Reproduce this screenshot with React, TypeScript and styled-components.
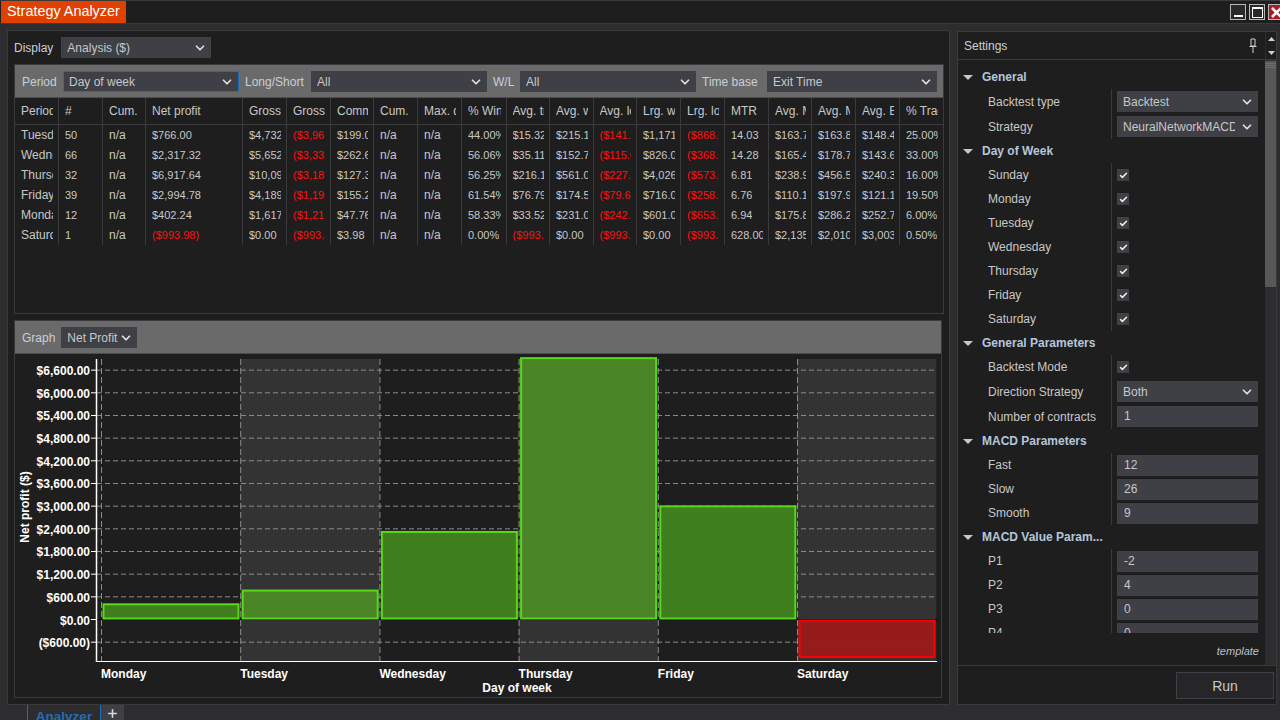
import { ChevronDown, Check, Plus } from "lucide-react";
import styled, { createGlobalStyle } from "styled-components";

const columns = [44, 44, 43, 97, 44, 44, 43, 44, 44, 44.5, 43.5, 43.5, 43.5, 44, 44, 44, 43, 44, 44, 44];

const headers = [
  "Period", "#", "Cum.", "Net profit", "Gross", "Gross", "Comm", "Cum.", "Max. drawdown", "% Win",
  "Avg. trade", "Avg. win", "Avg. loss", "Lrg. win", "Lrg. loss", "MTR", "Avg. MAE", "Avg. MFE", "Avg. ETD", "% Trades"
];

const rows = [
  ["Tuesday", "50", "n/a", "$766.00", "$4,732.00", "($3,966.00)", "$199.00", "n/a", "n/a", "44.00%", "$15.32", "$215.10", "($141.60)", "$1,171.00", "($868.00)", "14.03", "$163.70", "$163.80", "$148.40", "25.00%"],
  ["Wednesday", "66", "n/a", "$2,317.32", "$5,652.00", "($3,335.00)", "$262.60", "n/a", "n/a", "56.06%", "$35.11", "$152.70", "($115.00)", "$826.00", "($368.00)", "14.28", "$165.40", "$178.70", "$143.60", "33.00%"],
  ["Thursday", "32", "n/a", "$6,917.64", "$10,090.00", "($3,180.00)", "$127.30", "n/a", "n/a", "56.25%", "$216.10", "$561.00", "($227.00)", "$4,026.00", "($573.00)", "6.81", "$238.90", "$456.50", "$240.30", "16.00%"],
  ["Friday", "39", "n/a", "$2,994.78", "$4,189.00", "($1,190.00)", "$155.20", "n/a", "n/a", "61.54%", "$76.79", "$174.50", "($79.60)", "$716.00", "($258.00)", "6.76", "$110.10", "$197.90", "$121.10", "19.50%"],
  ["Monday", "12", "n/a", "$402.24", "$1,617.00", "($1,210.00)", "$47.76", "n/a", "n/a", "58.33%", "$33.52", "$231.00", "($242.00)", "$601.00", "($653.00)", "6.94", "$175.80", "$286.20", "$252.70", "6.00%"],
  ["Saturday", "1", "n/a", "($993.98)", "$0.00", "($993.98)", "$3.98", "n/a", "n/a", "0.00%", "($993.98)", "$0.00", "($993.98)", "$0.00", "($993.98)", "628.00", "$2,135.00", "$2,010.00", "$3,003.00", "0.50%"]
];

const days = [
  { name: "Monday", value: 402.24 },
  { name: "Tuesday", value: 766 },
  { name: "Wednesday", value: 2317.32 },
  { name: "Thursday", value: 6917.64 },
  { name: "Friday", value: 2994.78 },
  { name: "Saturday", value: -993.98 }
];

const ticks = [6600, 6000, 5400, 4800, 4200, 3600, 3000, 2400, 1800, 1200, 600, 0, -600];

type SettingRow =
  | { label: string; kind: "select" | "input"; value: string; tall?: boolean }
  | { label: string; kind: "check" };

const weekDays = ["Sunday", "Monday", "Tuesday", "Wednesday", "Thursday", "Friday", "Saturday"];

const sections: { title: string; rows: SettingRow[] }[] = [
  {
    title: "General",
    rows: [
      { label: "Backtest type", kind: "select", value: "Backtest", tall: true },
      { label: "Strategy", kind: "select", value: "NeuralNetworkMACD", tall: true }
    ]
  },
  {
    title: "Day of Week",
    rows: weekDays.map((label) => ({ label, kind: "check" as const }))
  },
  {
    title: "General Parameters",
    rows: [
      { label: "Backtest Mode", kind: "check" },
      { label: "Direction Strategy", kind: "select", value: "Both", tall: true },
      { label: "Number of contracts", kind: "input", value: "1", tall: true }
    ]
  },
  {
    title: "MACD Parameters",
    rows: [
      { label: "Fast", kind: "input", value: "12" },
      { label: "Slow", kind: "input", value: "26" },
      { label: "Smooth", kind: "input", value: "9" }
    ]
  },
  {
    title: "MACD Value Param...",
    rows: [
      { label: "P1", kind: "input", value: "-2" },
      { label: "P2", kind: "input", value: "4" },
      { label: "P3", kind: "input", value: "0" },
      { label: "P4", kind: "input", value: "0" },
      { label: "P5", kind: "input", value: "0" }
    ]
  }
];

const gridColumns = columns.map((c) => `${c}px`).join(" ");

const money = (v: number) => {
  const text = "$" + Math.abs(v).toLocaleString("en-US", { minimumFractionDigits: 2 });
  return v < 0 ? `(${text})` : text;
};

const yOf = (v: number) => 619.5 - (v * 22.67) / 600;

const ProfitChart = () => {
  const colW = 139.2;
  return (
    <ChartSvg viewBox="15 354 926 343">
      {days.map((d, i) =>
        i % 2 === 1 ? <rect key={d.name} x={101 + i * colW} y={359} width={colW} height={302} fill="#333333" /> : null
      )}
      {ticks.map((t) => (
        <line key={t} x1={97} x2={937} y1={yOf(t)} y2={yOf(t)} stroke="#8c8c8c" strokeDasharray="5 3" />
      ))}
      {days.map((d, i) => (
        <line
          key={d.name}
          x1={101.5 + i * colW}
          x2={101.5 + i * colW}
          y1={359}
          y2={664}
          stroke="#8c8c8c"
          strokeDasharray="6 3"
        />
      ))}
      <line x1={97} x2={937} y1={619.5} y2={619.5} stroke="#000" />
      {days.map((d, i) => {
        const x = 103.5 + i * colW;
        const top = yOf(Math.max(d.value, 0));
        const bottom = yOf(Math.min(d.value, 0));
        const up = d.value > 0;
        return (
          <rect
            key={d.name}
            x={x}
            y={top + (up ? 0 : 1)}
            width={135}
            height={bottom - top - 1}
            fill={up ? (i % 2 ? "#4a8628" : "#3f7f20") : "#9c1a1a"}
            fillOpacity={up ? 1 : 0.95}
            stroke={up ? "#58d816" : "#ff0000"}
            strokeWidth={2}
          />
        );
      })}
      <line x1={96.5} x2={96.5} y1={359} y2={662} stroke="#fff" strokeWidth={1.5} />
      <line x1={96} x2={937} y1={661.5} y2={661.5} stroke="#fff" strokeWidth={1.2} />
      {ticks.map((t) => (
        <g key={t}>
          <line x1={91} x2={96} y1={yOf(t)} y2={yOf(t)} stroke="#fff" />
          <AxisText x={90} y={yOf(t) + 5} textAnchor="end">
            {money(t)}
          </AxisText>
        </g>
      ))}
      {days.map((d, i) => (
        <AxisText key={d.name} x={101 + i * colW} y={678}>
          {d.name}
        </AxisText>
      ))}
      <AxisText x={517} y={692} textAnchor="middle">
        Day of week
      </AxisText>
      <AxisText x={29} y={507} textAnchor="middle" transform="rotate(-90 29 507)">
        Net profit ($)
      </AxisText>
    </ChartSvg>
  );
};

const Dropdown = ({ value, focused, className }: { value: string; focused?: boolean; className?: string }) => (
  <Select $focused={focused} className={className}>
    <SelectText>{value}</SelectText>
    <ChevronDown size={14} strokeWidth={3} color="#e0e0e0" />
  </Select>
);

export default function App() {
  return (
    <Page>
      <GlobalStyle />
      <TitleBar>
        <TitleTab>Strategy Analyzer</TitleTab>
        <WindowControls>
          <WinButton>
            <svg width="11" height="11" viewBox="0 0 11 11">
              <rect x="1" y="8" width="9" height="2" fill="#fff" />
            </svg>
          </WinButton>
          <WinButton>
            <svg width="11" height="11" viewBox="0 0 11 11">
              <rect x="0.5" y="0.5" width="10" height="10" fill="none" stroke="#fff" />
              <rect x="0" y="0" width="11" height="2" fill="#fff" />
            </svg>
          </WinButton>
          <CloseButton>
            <svg width="11" height="11" viewBox="0 0 11 11">
              <path d="M1 1 L10 10 M10 1 L1 10" stroke="#fff" strokeWidth="2.6" />
            </svg>
          </CloseButton>
        </WindowControls>
      </TitleBar>

      <Body>
        <MainPanel>
          <DisplayRow>
            <Label>Display</Label>
            <DisplaySelect value="Analysis ($)" />
          </DisplayRow>

          <TableBox>
            <FilterBar>
              <Label>Period</Label>
              <Dropdown value="Day of week" focused />
              <Label>Long/Short</Label>
              <Dropdown value="All" />
              <Label>W/L</Label>
              <Dropdown value="All" />
              <Label>Time base</Label>
              <Dropdown value="Exit Time" />
            </FilterBar>
            <HeaderRow style={{ gridTemplateColumns: gridColumns }}>
              {headers.map((h, i) => (
                <Cell key={`th-${i}`}>
                  <CellText>{h}</CellText>
                </Cell>
              ))}
            </HeaderRow>
            {rows.map((row) => (
              <DataRow key={row[0]} style={{ gridTemplateColumns: gridColumns }}>
                {row.map((v, i) => (
                  <Cell key={`td-${i}`}>
                    <CellText $negative={v.startsWith("(")} $numeric={/^[\d$(]/.test(v)}>
                      {v}
                    </CellText>
                  </Cell>
                ))}
              </DataRow>
            ))}
          </TableBox>

          <GraphBox>
            <GraphBar>
              <Label>Graph</Label>
              <GraphSelect value="Net Profit" />
            </GraphBar>
            <ProfitChart />
          </GraphBox>
        </MainPanel>

        <SidePanel>
          <SideHeader>
            <SideTitle>
              <span>Settings</span>
              <svg width="8" height="15" viewBox="0 0 8 15">
                <path d="M2 1 H6 V8 H2 Z M0.5 8.5 H7.5 M4 9 V15" fill="none" stroke="#d0d0d0" />
              </svg>
            </SideTitle>
            <ScrollButtons>
              <svg width="7" height="4" viewBox="0 0 7 4">
                <path d="M3.5 0 L7 4 H0 Z" fill="#d0d0d0" />
              </svg>
              <svg width="7" height="4" viewBox="0 0 7 4">
                <path d="M0 0 H7 L3.5 4 Z" fill="#d0d0d0" />
              </svg>
            </ScrollButtons>
          </SideHeader>
          <SideContent>
            <SideMain>
              <SettingsScroll>
                {sections.map((s) => (
                  <div key={s.title}>
                    <SectionTitle>
                      <svg width="10" height="5" viewBox="0 0 10 5">
                        <path d="M0 0 H10 L5 5 Z" fill="#c8c8c8" />
                      </svg>
                      <span>{s.title}</span>
                    </SectionTitle>
                    {s.rows.map((r) => (
                      <PropRow key={r.label} $tall={r.kind !== "check" && r.tall}>
                        <PropLabel>{r.label}</PropLabel>
                        <PropValue>
                          {r.kind === "check" && (
                            <CheckBox>
                              <Check size={9} strokeWidth={4} color="#f0f0f0" />
                            </CheckBox>
                          )}
                          {r.kind === "select" && <PropSelect value={r.value} />}
                          {r.kind === "input" && <PropInput>{r.value}</PropInput>}
                        </PropValue>
                      </PropRow>
                    ))}
                  </div>
                ))}
              </SettingsScroll>
              <TemplateLink>template</TemplateLink>
            </SideMain>
            <ScrollTrack>
              <ScrollThumb />
            </ScrollTrack>
          </SideContent>
          <SideFooter>
            <RunButton>Run</RunButton>
          </SideFooter>
        </SidePanel>
      </Body>

      <TabBar>
        <ActiveTab>Analyzer</ActiveTab>
        <AddTab>
          <Plus size={13} strokeWidth={3} color="#d8d8d8" />
        </AddTab>
      </TabBar>
    </Page>
  );
}

const GlobalStyle = createGlobalStyle`
  html, body {
    margin: 0;
    padding: 0;
    background: #2d2d30;
  }
  * {
    box-sizing: border-box;
  }
`;

const Page = styled.div`
  width: 1280px;
  height: 720px;
  overflow: hidden;
  display: flex;
  flex-direction: column;
  background: #2d2d30;
  color: #c8c8c8;
  font-family: "Liberation Sans", Arial, sans-serif;
  font-size: 12px;
`;

const TitleBar = styled.div`
  height: 24px;
  flex: none;
  display: flex;
  justify-content: space-between;
  background: #1e1e1e;
  border-top: 1px solid #3a3a3c;
  border-bottom: 1px solid #3a3a3c;
`;

const TitleTab = styled.div`
  width: 125px;
  margin-left: 1px;
  padding-left: 6px;
  height: 22px;
  line-height: 21px;
  background: #e04000;
  color: #fff;
  font-size: 14.4px;
  white-space: nowrap;
`;

const WindowControls = styled.div`
  display: flex;
  gap: 3px;
  padding-top: 3px;
  width: 50px;
  overflow: hidden;
`;

const WinButton = styled.div`
  width: 16px;
  height: 16px;
  flex: none;
  display: flex;
  align-items: center;
  justify-content: center;
  border: 1px solid #b8b8b8;
  background: #2a2a2a;
`;

const CloseButton = styled(WinButton)`
  background: #a51d22;
`;

const Body = styled.div`
  flex: 1;
  min-height: 0;
  display: flex;
  gap: 7px;
  padding: 6px 3px 0 7px;
`;

const MainPanel = styled.div`
  width: 943px;
  display: flex;
  flex-direction: column;
  padding: 6px 5px 6px 6px;
  background: #1e1e1e;
  border: 1px solid #3a3a3c;
`;

const DisplayRow = styled.div`
  height: 21px;
  margin-bottom: 6px;
  flex: none;
  display: flex;
  align-items: center;
  gap: 8px;
`;

const Label = styled.div`
  color: #c8d0d8;
  white-space: nowrap;
`;

const Select = styled.div<{ $focused?: boolean }>`
  height: 21px;
  display: flex;
  align-items: center;
  justify-content: space-between;
  padding: 0 4px 0 ${({ $focused }) => ($focused ? "5px" : "6px")};
  background: #3f3f46;
  color: #c8c8c8;
  border: ${({ $focused }) => ($focused ? "1px solid #1c6fb8" : "none")};
  overflow: hidden;
`;

const SelectText = styled.span`
  white-space: nowrap;
  overflow: hidden;
  flex: 1;
`;

const DisplaySelect = styled(Dropdown)`
  width: 150px;
`;

const TableBox = styled.div`
  height: 250px;
  flex: none;
  border: 1px solid #3a3a3c;
`;

const FilterBar = styled.div`
  height: 33px;
  display: grid;
  grid-template-columns: 41px 176px 72px 176px 33px 176px 71px 170px;
  align-items: center;
  padding: 1px 0 0 7px;
  background: #6a6a6a;
  border-bottom: 1px solid #4c4c4c;

  ${Label}:not(:first-child) {
    padding-left: 6px;
  }
`;

const HeaderRow = styled.div`
  display: grid;
  height: 27px;
  border-bottom: 1px solid #3a3a3c;
`;

const DataRow = styled.div`
  display: grid;
  height: 20px;
`;

const Cell = styled.div`
  display: flex;
  align-items: center;
  padding: 0 5px 0 6px;
  border-right: 1px solid #3a3a3c;
  min-width: 0;
`;

const CellText = styled.div<{ $negative?: boolean; $numeric?: boolean }>`
  overflow: hidden;
  white-space: nowrap;
  color: ${({ $negative }) => ($negative ? "#ff1010" : "#c8c8c8")};
  font-size: ${({ $numeric }) => ($numeric ? "11px" : "12px")};
`;

const GraphBox = styled.div`
  flex: 1;
  margin-top: 6px;
  width: 928px;
  min-height: 0;
  display: flex;
  flex-direction: column;
  border: 1px solid #3a3a3c;
`;

const GraphBar = styled.div`
  height: 33px;
  flex: none;
  display: flex;
  align-items: center;
  gap: 6px;
  padding: 1px 0 0 7px;
  background: #6a6a6a;
  border-bottom: 1px solid #4c4c4c;
`;

const GraphSelect = styled(Dropdown)`
  width: 76px;
`;

const ChartSvg = styled.svg`
  display: block;
  flex: none;
  width: 926px;
  height: 343px;
`;

const AxisText = styled.text`
  fill: #fff;
  font-family: "Liberation Sans", Arial, sans-serif;
  font-size: 12px;
  font-weight: bold;
`;

const SidePanel = styled.div`
  width: 320px;
  margin-top: 1px;
  display: flex;
  flex-direction: column;
  background: #1e1e1e;
  border: 1px solid #3a3a3c;
`;

const SideHeader = styled.div`
  height: 28px;
  flex: none;
  display: flex;
  border-bottom: 1px solid #3a3a3c;
`;

const SideTitle = styled.div`
  flex: 1;
  display: flex;
  align-items: center;
  justify-content: space-between;
  padding: 0 8px 0 6px;
  color: #c8d0d8;
`;

const ScrollButtons = styled.div`
  width: 11px;
  flex: none;
  display: flex;
  flex-direction: column;
  align-items: center;
  justify-content: center;
  gap: 10px;
  border-left: 1px solid #2d2d30;
`;

const SideContent = styled.div`
  flex: 1;
  min-height: 0;
  display: flex;
`;

const SideMain = styled.div`
  flex: 1;
  min-width: 0;
  display: flex;
  flex-direction: column;
  background: #1e1e1e;
`;

const SettingsScroll = styled.div`
  height: 573px;
  flex: none;
  padding-top: 5px;
  overflow: hidden;
`;

const SectionTitle = styled.div`
  height: 24px;
  display: flex;
  align-items: center;
  gap: 9px;
  padding-left: 5px;
  font-weight: bold;
  color: #b4c6dc;
`;

const PropRow = styled.div<{ $tall?: boolean }>`
  height: ${({ $tall }) => ($tall ? "25px" : "24px")};
  display: grid;
  grid-template-columns: 154px minmax(0, 1fr);
`;

const PropLabel = styled.div`
  display: flex;
  align-items: center;
  padding-left: 30px;
  color: #c8c8c8;
  border-right: 1px solid #3a3a3c;
`;

const PropValue = styled.div`
  display: flex;
  align-items: center;
  min-width: 0;
  padding: 0 7px 0 5px;
`;

const PropSelect = styled(Dropdown)`
  width: 100%;

  ${SelectText} {
    margin-right: 5px;
  }
`;

const PropInput = styled.div`
  width: 100%;
  height: 21px;
  line-height: 21px;
  padding-left: 7px;
  background: #3f3f46;
  color: #c8c8c8;
`;

const CheckBox = styled.div`
  width: 12px;
  height: 12px;
  display: flex;
  align-items: center;
  justify-content: center;
  background: #3f3f46;
`;

const TemplateLink = styled.div`
  flex: 1;
  padding: 12px 6px 0 0;
  text-align: right;
  font-size: 11px;
  font-style: italic;
  color: #b8c0c8;
`;

const ScrollTrack = styled.div`
  width: 11px;
  flex: none;
  background: #2d2d30;
`;

const ScrollThumb = styled.div`
  height: 226px;
  margin-top: 1px;
  background: repeating-linear-gradient(#6e6e6e 0 1px, #585858 1px 2px) 0 2px / 100% 5px no-repeat, #585858;
`;

const SideFooter = styled.div`
  height: 39px;
  flex: none;
  display: flex;
  justify-content: flex-end;
  align-items: flex-start;
  padding: 6px 2px 0 0;
  border-top: 1px solid #3a3a3c;
`;

const RunButton = styled.div`
  width: 98px;
  height: 27px;
  display: flex;
  align-items: center;
  justify-content: center;
  background: #262628;
  border: 1px solid #3f3f46;
  color: #c8c8c8;
  font-size: 14px;
`;

const TabBar = styled.div`
  height: 15px;
  flex: none;
  display: flex;
  padding-left: 27px;
  overflow: hidden;
`;

const ActiveTab = styled.div`
  width: 74px;
  height: 24px;
  line-height: 24px;
  text-align: center;
  border-left: 1px solid #1c6fb8;
  border-right: 1px solid #1c6fb8;
  color: #1c6fb8;
  font-size: 13.5px;
  font-weight: bold;
`;

const AddTab = styled.div`
  width: 23px;
  display: flex;
  justify-content: center;
  align-items: flex-start;
  padding-top: 2px;
  background: #3f3f46;
`;
